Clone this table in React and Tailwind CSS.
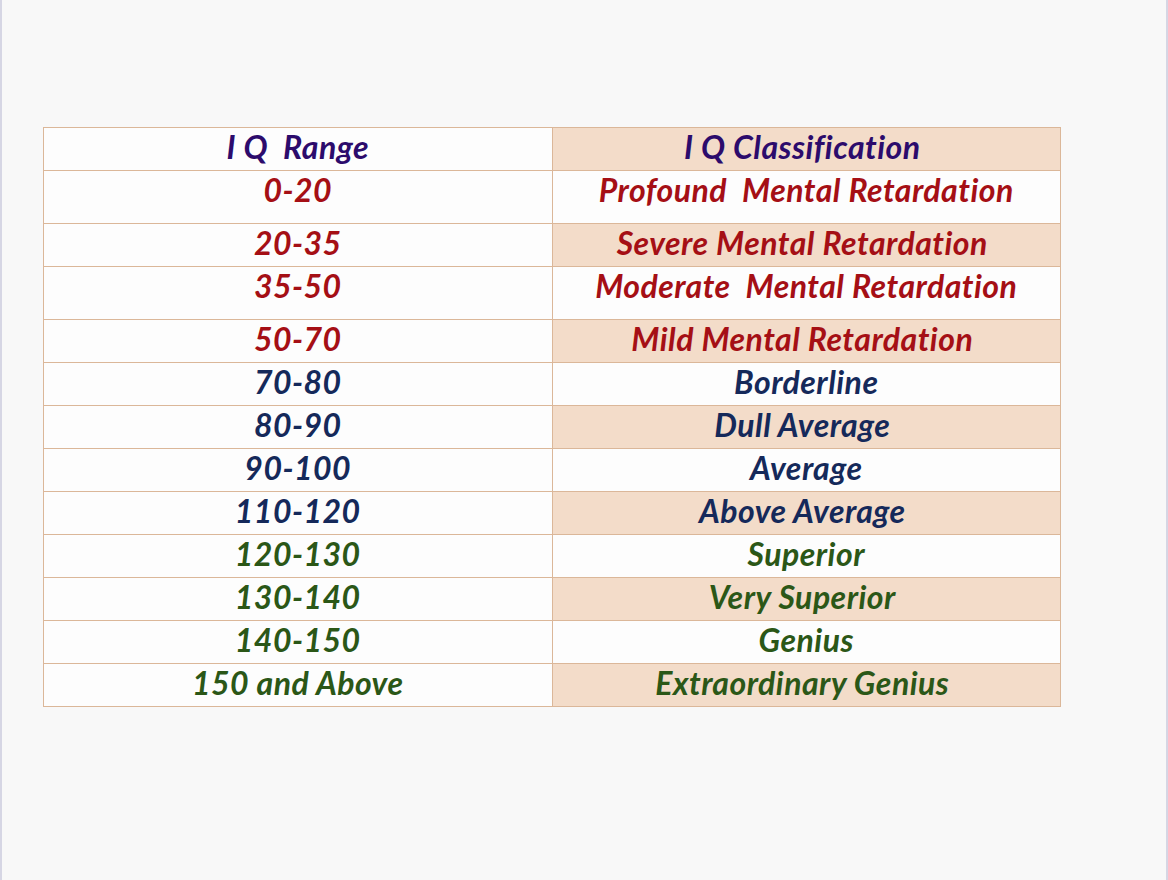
const rows = [
  { range: '0-20', label: 'Profound  Mental Retardation', tone: 'red', tall: true },
  { range: '20-35', label: 'Severe Mental Retardation', tone: 'red' },
  { range: '35-50', label: 'Moderate  Mental Retardation', tone: 'red', tall: true },
  { range: '50-70', label: 'Mild Mental Retardation', tone: 'red' },
  { range: '70-80', label: 'Borderline', tone: 'navy' },
  { range: '80-90', label: 'Dull Average', tone: 'navy' },
  { range: '90-100', label: 'Average', tone: 'navy' },
  { range: '110-120', label: 'Above Average', tone: 'navy' },
  { range: '120-130', label: 'Superior', tone: 'green' },
  { range: '130-140', label: 'Very Superior', tone: 'green' },
  { range: '140-150', label: 'Genius', tone: 'green' },
  { range: '150 and Above', label: 'Extraordinary Genius', tone: 'green' },
];

const toneClass = {
  red: 'text-[#a50f15]',
  navy: 'text-[#15295a]',
  green: 'text-[#2b5717]',
};

function Cell({ children, shaded, tall, className }) {
  return (
    <td
      className={`border border-[#dbb799] align-top whitespace-pre ${tall ? 'h-[53px]' : 'h-[43px]'} ${shaded ? 'bg-[#f3dcc9] pl-1 pr-3' : 'bg-[#fdfdfd] px-2'} ${className}`}
    >
      <div className="flex h-[37px] items-center justify-center">{children}</div>
    </td>
  );
}

export default function App() {
  return (
    <div
      className="flex h-[880px] w-[1168px] border-x-2 border-[#d6d6e4] bg-[#f8f8f8] pt-[127px] pl-[41px]"
      style={{ fontFamily: 'Lato, "Open Sans", sans-serif' }}
    >
      <table className="h-fit w-[1018px] table-fixed border-collapse text-[32px] font-bold italic leading-none tracking-[0.015em]">
        <tbody>
          <tr>
            <Cell className="text-[#2c0b6c]">I Q  Range</Cell>
            <Cell shaded className="text-[#2c0b6c]">I Q Classification</Cell>
          </tr>
          {rows.map((r, i) => (
            <tr key={r.range}>
              <Cell tall={r.tall} className={toneClass[r.tone]}>{r.range}</Cell>
              <Cell tall={r.tall} shaded={i % 2 === 1} className={toneClass[r.tone]}>{r.label}</Cell>
            </tr>
          ))}
        </tbody>
      </table>
    </div>
  );
}
